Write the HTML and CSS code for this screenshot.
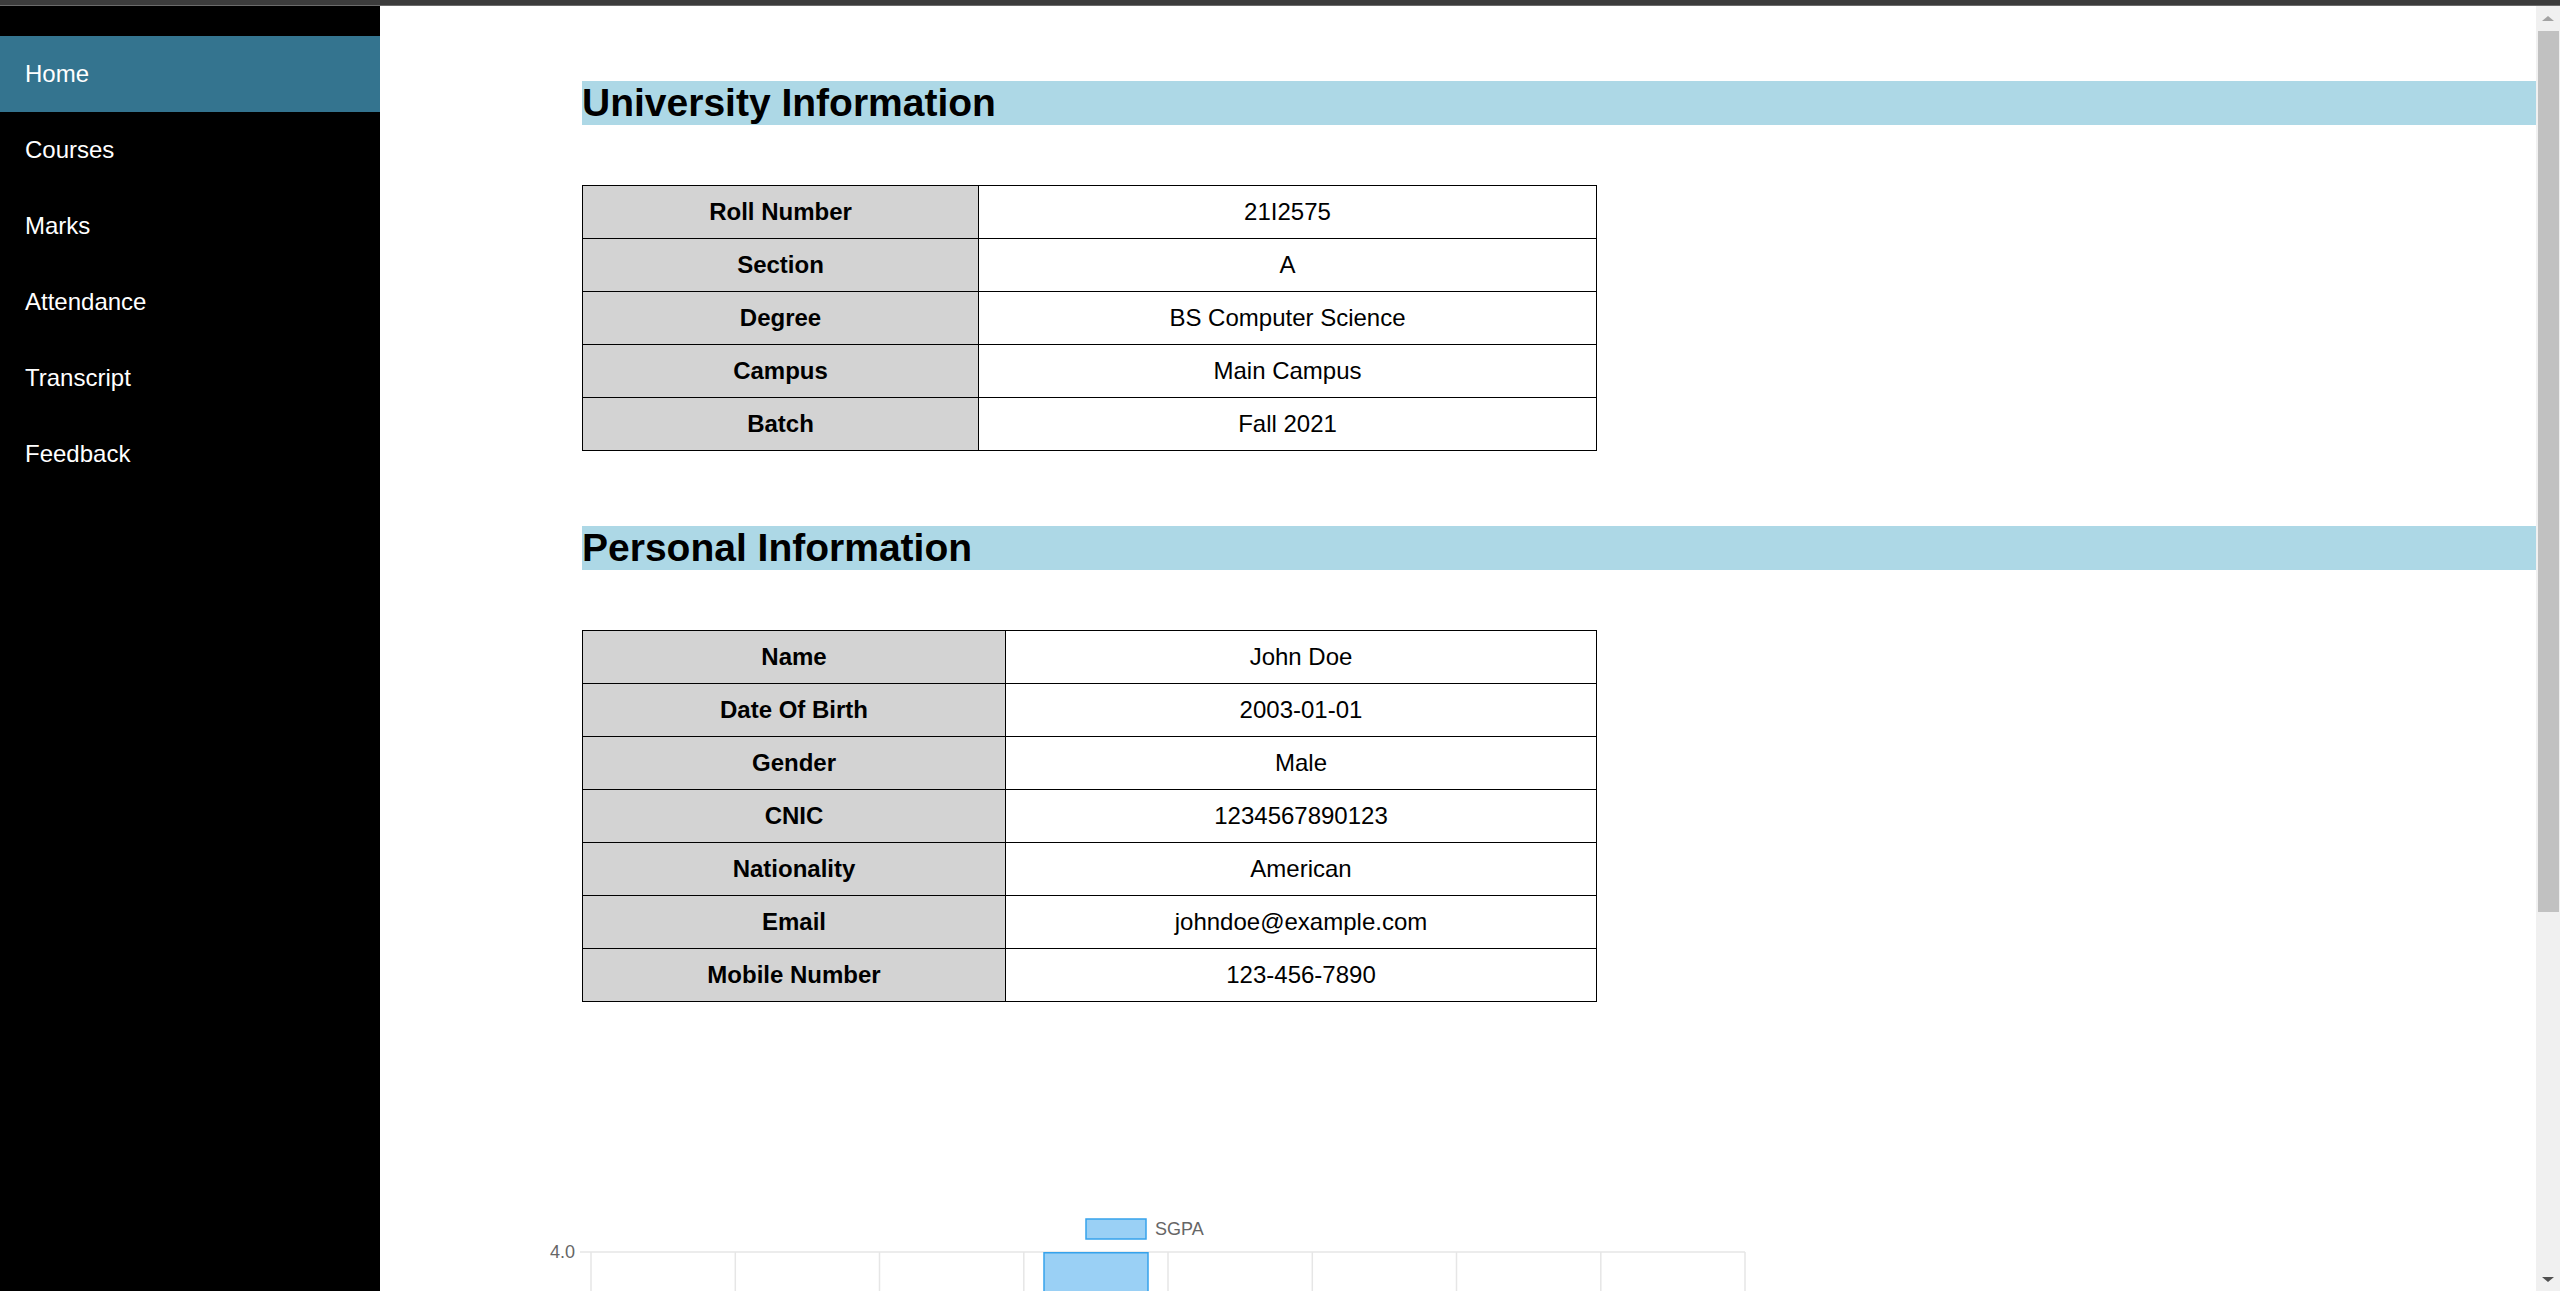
FILE: index.html
```html
<!DOCTYPE html>
<html lang="en">
<head>
<meta charset="utf-8">
<title>Student Portal - Home</title>
<link rel="stylesheet" href="styles.css">
</head>
<body>
<div class="window-edge"></div>
<div class="app">
  <nav class="sidebar">
    <a class="nav-link active" href="#">Home</a>
    <a class="nav-link" href="#">Courses</a>
    <a class="nav-link" href="#">Marks</a>
    <a class="nav-link" href="#">Attendance</a>
    <a class="nav-link" href="#">Transcript</a>
    <a class="nav-link" href="#">Feedback</a>
  </nav>
  <main class="content">
    <h2 class="section-title">University Information</h2>
    <table class="info-table uni">
      <tr><th>Roll Number</th><td>21I2575</td></tr>
      <tr><th>Section</th><td>A</td></tr>
      <tr><th>Degree</th><td>BS Computer Science</td></tr>
      <tr><th>Campus</th><td>Main Campus</td></tr>
      <tr><th>Batch</th><td>Fall 2021</td></tr>
    </table>
    <h2 class="section-title personal-title">Personal Information</h2>
    <table class="info-table personal">
      <tr><th>Name</th><td>John Doe</td></tr>
      <tr><th>Date Of Birth</th><td>2003-01-01</td></tr>
      <tr><th>Gender</th><td>Male</td></tr>
      <tr><th>CNIC</th><td>1234567890123</td></tr>
      <tr><th>Nationality</th><td>American</td></tr>
      <tr><th>Email</th><td>johndoe@example.com</td></tr>
      <tr><th>Mobile Number</th><td>123-456-7890</td></tr>
    </table>
    <div class="chart">
      <svg class="chart-svg" width="1220" height="611" viewBox="0 0 1220 611">
        <rect x="546" y="19" width="60" height="20" fill="rgba(54,162,235,0.5)" stroke="#36a2eb" stroke-width="1.5"/>
        <text class="chart-label" x="615" y="35">SGPA</text>
        <g stroke="#e6e6e6" stroke-width="1.5">
          <line x1="40" y1="52" x2="1205" y2="52"/>
          <line x1="40" y1="115.5" x2="1205" y2="115.5"/>
          <line x1="40" y1="179" x2="1205" y2="179"/>
          <line x1="40" y1="242.5" x2="1205" y2="242.5"/>
          <line x1="40" y1="306" x2="1205" y2="306"/>
          <line x1="40" y1="369.5" x2="1205" y2="369.5"/>
          <line x1="40" y1="433" x2="1205" y2="433"/>
          <line x1="40" y1="496.5" x2="1205" y2="496.5"/>
          <line x1="40" y1="560" x2="1205" y2="560"/>
          <line x1="51" y1="52" x2="51" y2="570"/>
          <line x1="195.3" y1="52" x2="195.3" y2="570"/>
          <line x1="339.5" y1="52" x2="339.5" y2="570"/>
          <line x1="483.8" y1="52" x2="483.8" y2="570"/>
          <line x1="628" y1="52" x2="628" y2="570"/>
          <line x1="772.3" y1="52" x2="772.3" y2="570"/>
          <line x1="916.5" y1="52" x2="916.5" y2="570"/>
          <line x1="1060.8" y1="52" x2="1060.8" y2="570"/>
          <line x1="1205" y1="52" x2="1205" y2="570"/>
        </g>
        <text class="chart-label" x="35" y="58" text-anchor="end">4.0</text>
        <rect x="504" y="52.75" width="104" height="507.25" fill="rgba(54,162,235,0.5)" stroke="#36a2eb" stroke-width="1.5"/>
      </svg>
    </div>
  </main>
  <div class="scrollbar">
    <div class="sb-button"><span class="arrow-up"></span></div>
    <div class="sb-thumb"></div>
    <div class="sb-rest"></div>
    <div class="sb-button"><span class="arrow-down"></span></div>
  </div>
</div>
</body>
</html>
```

FILE: styles.css
```css
html, body {
  margin: 0;
  padding: 0;
}

body {
  height: 1291px;
  overflow: hidden;
  display: flex;
  flex-direction: column;
  background: #ffffff;
  font-family: "Liberation Sans", Arial, Helvetica, sans-serif;
  color: #000;
}

.window-edge {
  flex: none;
  height: 5px;
  background: #3c3c3c;
  border-bottom: 1px solid #6b6b6b;
}

.app {
  flex: 1;
  display: flex;
  min-height: 0;
}

.sidebar {
  flex: none;
  width: 380px;
  background: #000;
  padding-top: 30px;
  box-sizing: border-box;
}

.nav-link {
  display: block;
  height: 76px;
  line-height: 76px;
  padding-left: 25px;
  color: #fff;
  font-size: 24px;
  text-decoration: none;
}

.nav-link.active {
  background: #34748f;
}

.content {
  flex: 1;
  min-width: 0;
  overflow: hidden;
  padding-top: 75px;
  padding-left: 202px;
}

.section-title {
  margin: 0;
  background: #add8e6;
  font-size: 39px;
  line-height: 44px;
  font-weight: bold;
  color: #000;
}

.personal-title {
  margin-top: 75px;
}

.info-table {
  border-collapse: collapse;
  width: 1015px;
  margin-top: 60px;
  font-size: 24px;
}

.info-table th,
.info-table td {
  border: 1px solid #000;
  padding: 12px;
  line-height: 28px;
  text-align: center;
}

.info-table th {
  background: #d3d3d3;
  font-weight: bold;
}

.info-table td {
  background: #fff;
  font-weight: normal;
}

.uni th {
  width: 371px;
}

.personal th {
  width: 398px;
}

.chart {
  margin-top: 198px;
  margin-left: -42px;
}

.chart-svg {
  display: block;
}

.chart-label {
  font-family: "Liberation Sans", Arial, Helvetica, sans-serif;
  font-size: 18px;
  fill: #666;
}

.scrollbar {
  flex: none;
  width: 24px;
  background: #f0f0f0;
  display: flex;
  flex-direction: column;
}

.sb-button {
  flex: none;
  height: 24px;
  display: flex;
  align-items: center;
  justify-content: center;
}

.arrow-up {
  width: 0;
  height: 0;
  border-left: 6px solid transparent;
  border-right: 6px solid transparent;
  border-bottom: 5px solid #a3a3a3;
}

.arrow-down {
  width: 0;
  height: 0;
  border-left: 6px solid transparent;
  border-right: 6px solid transparent;
  border-top: 5px solid #505050;
}

.sb-thumb {
  flex: none;
  height: 881px;
  margin-top: 1px;
  margin-left: 2px;
  width: 21px;
  background: #c1c1c1;
}

.sb-rest {
  flex: 1;
}
```
